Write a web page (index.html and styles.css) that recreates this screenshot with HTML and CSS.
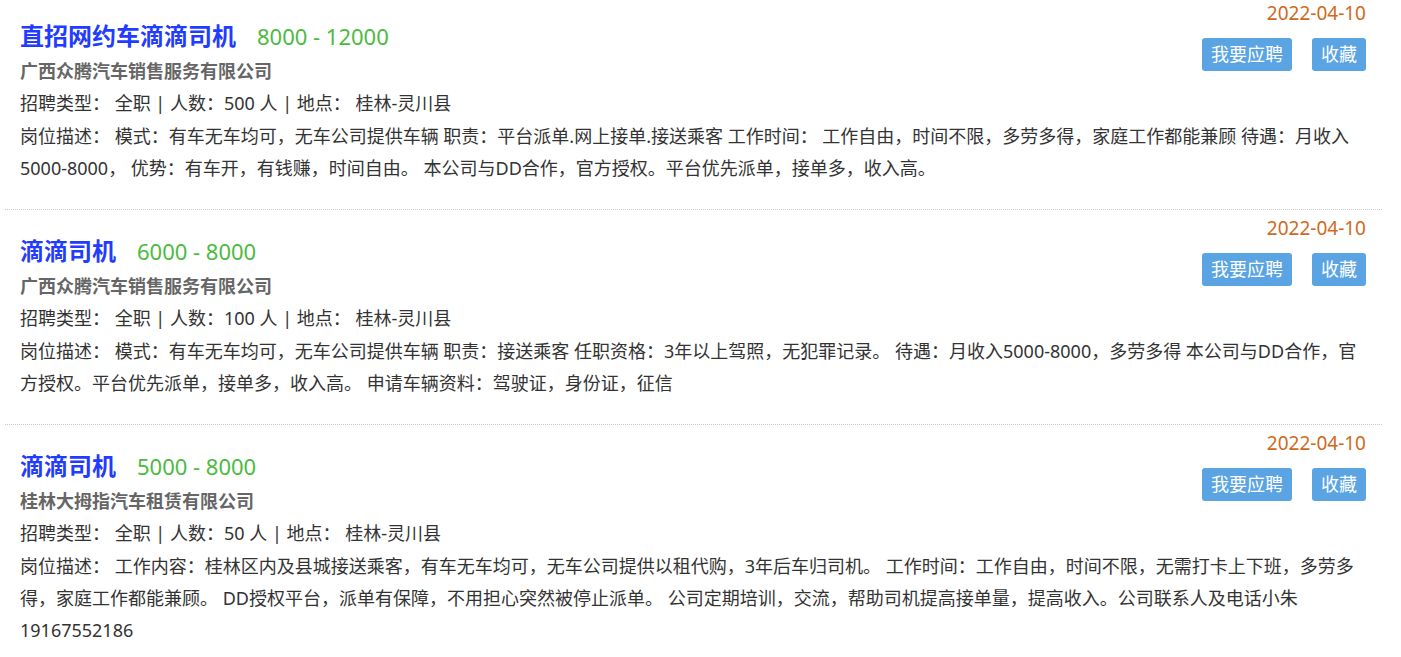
FILE: index.html
```html
<!DOCTYPE html>
<html lang="zh-CN">
<head>
    <meta charset="UTF-8">
    <meta name="viewport" content="width=device-width, initial-scale=1.0">
    <title>招聘信息</title>
    <link rel="stylesheet" href="styles.css">
</head>
<body>
<div class="job-list">
    <div class="job">
        <div class="date">2022-04-10</div>
        <div class="head">
            <div class="head-info">
                <div class="title-row">
                    <a class="title" href="#">直招网约车滴滴司机</a>
                    <span class="salary">8000 - 12000</span>
                </div>
                <div class="company">广西众腾汽车销售服务有限公司</div>
            </div>
            <div class="actions">
                <a class="btn" href="#">我要应聘</a>
                <a class="btn" href="#">收藏</a>
            </div>
        </div>
        <div class="meta">招聘类型： 全职 | 人数：500 人 | 地点： 桂林-灵川县</div>
        <div class="desc">岗位描述： 模式：有车无车均可，无车公司提供车辆 职责：平台派单.网上接单.接送乘客 工作时间： 工作自由，时间不限，多劳多得，家庭工作都能兼顾 待遇：月收入5000-8000， 优势：有车开，有钱赚，时间自由。 本公司与DD合作，官方授权。平台优先派单，接单多，收入高。</div>
    </div>
    <div class="job">
        <div class="date">2022-04-10</div>
        <div class="head">
            <div class="head-info">
                <div class="title-row">
                    <a class="title" href="#">滴滴司机</a>
                    <span class="salary">6000 - 8000</span>
                </div>
                <div class="company">广西众腾汽车销售服务有限公司</div>
            </div>
            <div class="actions">
                <a class="btn" href="#">我要应聘</a>
                <a class="btn" href="#">收藏</a>
            </div>
        </div>
        <div class="meta">招聘类型： 全职 | 人数：100 人 | 地点： 桂林-灵川县</div>
        <div class="desc">岗位描述： 模式：有车无车均可，无车公司提供车辆 职责：接送乘客 任职资格：3年以上驾照，无犯罪记录。 待遇：月收入5000-8000，多劳多得 本公司与DD合作，官方授权。平台优先派单，接单多，收入高。 申请车辆资料：驾驶证，身份证，征信</div>
    </div>
    <div class="job">
        <div class="date">2022-04-10</div>
        <div class="head">
            <div class="head-info">
                <div class="title-row">
                    <a class="title" href="#">滴滴司机</a>
                    <span class="salary">5000 - 8000</span>
                </div>
                <div class="company">桂林大拇指汽车租赁有限公司</div>
            </div>
            <div class="actions">
                <a class="btn" href="#">我要应聘</a>
                <a class="btn" href="#">收藏</a>
            </div>
        </div>
        <div class="meta">招聘类型： 全职 | 人数：50 人 | 地点： 桂林-灵川县</div>
        <div class="desc">岗位描述： 工作内容：桂林区内及县城接送乘客，有车无车均可，无车公司提供以租代购，3年后车归司机。 工作时间：工作自由，时间不限，无需打卡上下班，多劳多得，家庭工作都能兼顾。 DD授权平台，派单有保障，不用担心突然被停止派单。 公司定期培训，交流，帮助司机提高接单量，提高收入。公司联系人及电话小朱19167552186</div>
    </div>
</div>
</body>
</html>
```

FILE: styles.css
```css
body {
    margin: 0;
    padding: 0;
    background-color: #fff;
    font-family: "Noto Sans", "Noto Sans CJK SC", sans-serif;
    color: #333;
}
a {
    text-decoration: none;
}
.job-list {
    width: 1377px;
    margin-left: 5px;
}
.job {
    padding: 10px 16px 25px 15px;
    border-bottom: 1px dotted #c8c8c8;
}
.job:first-child {
    padding-top: 5px;
}
.date {
    text-align: right;
    font-size: 19px;
    line-height: 16px;
    color: #cf6a1c;
}
.head {
    display: flex;
    align-items: center;
    justify-content: space-between;
}
.title-row {
    display: flex;
    align-items: baseline;
    margin-top: 1px;
    line-height: 28px;
}
.title {
    font-size: 24px;
    font-weight: bold;
    color: #1f3cff;
}
.salary {
    margin-left: 21px;
    font-size: 22px;
    color: #4cba3e;
}
.company {
    margin-top: 5px;
    font-size: 18px;
    line-height: 32px;
    font-weight: bold;
    color: #666;
}
.actions {
    display: flex;
    gap: 20px;
}
.btn {
    display: block;
    height: 33px;
    line-height: 33px;
    padding: 0 9px;
    font-size: 18px;
    color: #fff;
    background-color: #5ba4e3;
    border-radius: 3px;
}
.meta {
    font-size: 18px;
    line-height: 33px;
}
.desc {
    font-size: 18px;
    line-height: 32px;
}
```
